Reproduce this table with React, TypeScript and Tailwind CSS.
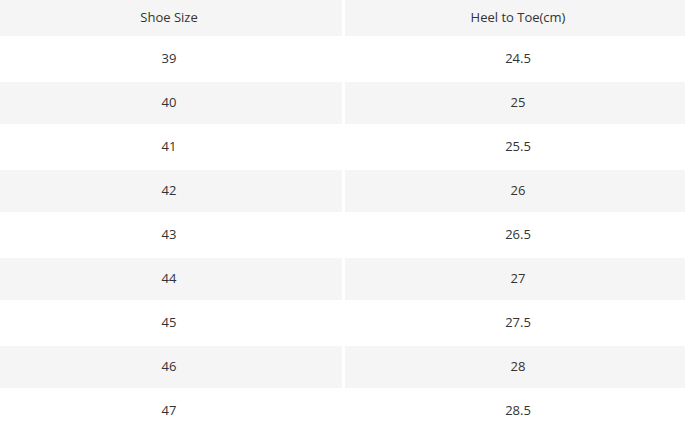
const rows: [string, string][] = [
  ["39", "24.5"],
  ["40", "25"],
  ["41", "25.5"],
  ["42", "26"],
  ["43", "26.5"],
  ["44", "27"],
  ["45", "27.5"],
  ["46", "28"],
  ["47", "28.5"],
];

export default function App() {
  return (
    <div className="h-[430px] w-[685px] overflow-hidden bg-white font-['Open_Sans',sans-serif] text-[13px] text-[#333]">
      <div className="-ml-[4px] grid grid-cols-[346px_346px] gap-x-[3px] gap-y-[2px]">
        <div className="flex h-[36px] items-center justify-center bg-[#f5f5f5]">Shoe Size</div>
        <div className="flex h-[36px] items-center justify-center bg-[#f5f5f5]">Heel to Toe(cm)</div>
        {rows.map(([size, len], i) => {
          const bg = i % 2 === 1 ? "bg-[#f5f5f5]" : "bg-white";
          return [
            <div key={`s${i}`} className={`flex h-[42px] items-center justify-center ${bg}`}>
              {size}
            </div>,
            <div key={`l${i}`} className={`flex h-[42px] items-center justify-center ${bg}`}>
              {len}
            </div>,
          ];
        })}
      </div>
    </div>
  );
}
